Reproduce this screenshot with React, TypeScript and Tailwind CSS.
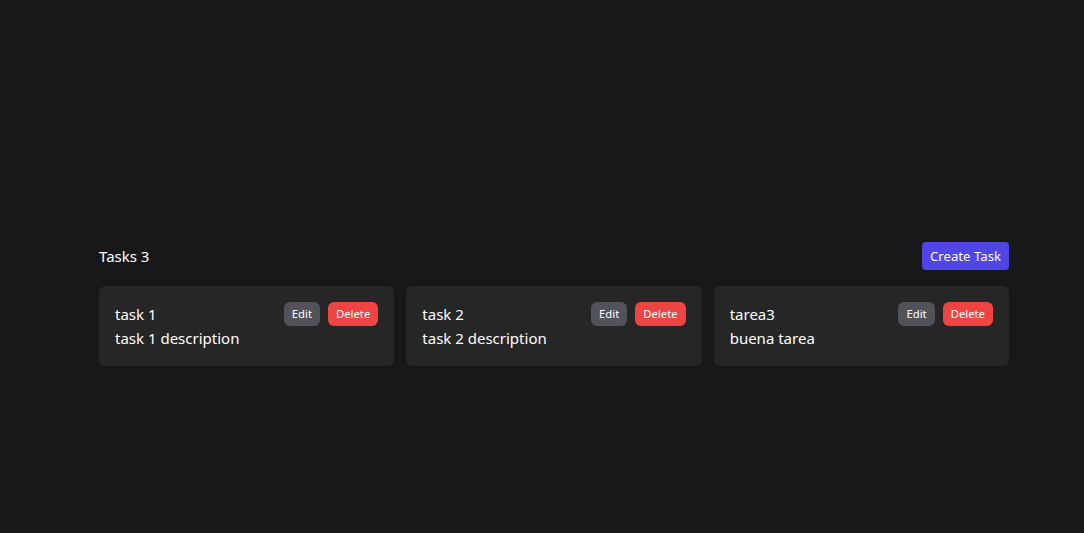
import React from "react";

type Task = { id: number; title: string; description: string };

const tasks: Task[] = [
  { id: 1, title: "task 1", description: "task 1 description" },
  { id: 2, title: "task 2", description: "task 2 description" },
  { id: 3, title: "tarea3", description: "buena tarea" },
];

const TaskCard = ({ task }: { task: Task }) => {
  return (
    <div className="bg-[#262626] rounded-md p-4">
      <div className="flex items-center justify-between h-6">
        <h3 className="text-[15px] leading-6">{task.title}</h3>
        <div className="flex gap-2">
          <button className="bg-[#52525b] text-white text-[11.3px] leading-4 px-2 py-1 rounded-md">
            Edit
          </button>
          <button className="bg-[#ef4444] text-white text-[11.3px] leading-4 px-2 py-1 rounded-md">
            Delete
          </button>
        </div>
      </div>
      <p className="text-[15px] leading-6">{task.description}</p>
    </div>
  );
};

export default function App() {
  return (
    <main
      className="min-h-screen bg-[#18181b] text-white pt-[242px] pl-[99px]"
      style={{ fontFamily: '"Noto Sans", "Open Sans", sans-serif' }}
    >
      <div className="w-[910px]">
        <header className="flex items-center justify-between mb-4">
          <h1 className="text-[15px]">Tasks {tasks.length}</h1>
          <button className="bg-[#4f46e5] text-white text-[13.2px] leading-5 px-2 py-1 rounded-sm">
            Create Task
          </button>
        </header>
        <div className="grid grid-cols-3 gap-3">
          {tasks.map((task) => (
            <TaskCard key={task.id} task={task} />
          ))}
        </div>
      </div>
    </main>
  );
}
